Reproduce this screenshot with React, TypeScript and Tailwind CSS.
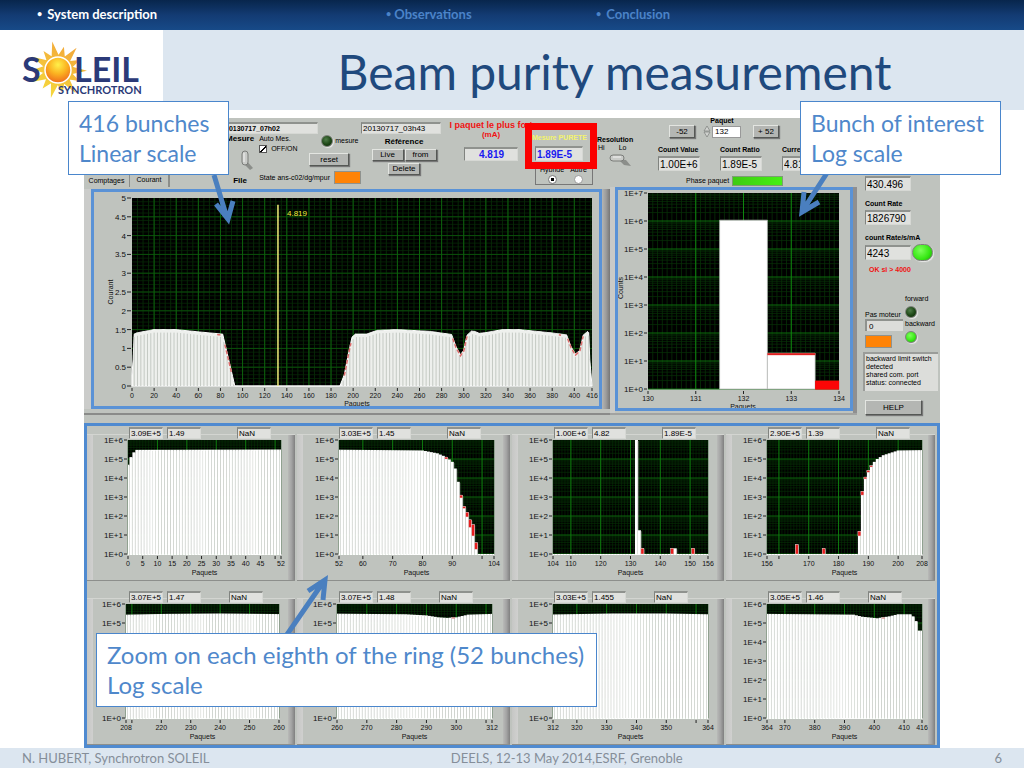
import type { ReactNode } from "react";

interface Tick {
  at: number;
  label?: string;
}

interface RedMark {
  at: number;
  from: number;
  to: number;
}

type Point = [number, number];

// Linear interpolation between control points
function sample(points: Point[], x: number) {
  if (x <= points[0][0]) return points[0][1];
  for (let i = 1; i < points.length; i++) {
    const [x1, y1] = points[i];
    const [x0, y0] = points[i - 1];
    if (x <= x1) return y0 + ((y1 - y0) * (x - x0)) / (x1 - x0);
  }
  return points[points.length - 1][1];
}

const range = (from: number, to: number, step = 1) => {
  const out: number[] = [];
  for (let v = from; v <= to; v += step) out.push(v);
  return out;
};

const ticks = (values: number[], silent: number[] = []): Tick[] => [
  ...values.map((v) => ({ at: v, label: String(v) })),
  ...silent.map((v) => ({ at: v })),
];

const logMinors = [2, 3, 4, 5, 6, 7, 8, 9].map((v) => Math.log10(v));

/* ---------- small instrument controls ---------- */

function Readout({ value, label, className }: { value: string; label: string; className: string }) {
  return (
    <input
      readOnly
      value={value}
      aria-label={label}
      className={`min-w-0 border-t-2 border-l border-r border-b border-t-[#8f928e] border-l-[#80837f] border-r-[#d6d8d4] border-b-[#d6d8d4] bg-[#e0e1de] pl-[1px] outline-none ${className}`}
    />
  );
}

function PanelButton({ children, className = "" }: { children: ReactNode; className?: string }) {
  return (
    <button
      type="button"
      className={`border border-t-[#e3e5e1] border-l-[#e3e5e1] border-r-[#555855] border-b-[#555855] bg-[#b4b6b3] text-[8px] leading-[8px] shadow-[1px_1px_1px_#777] ${className}`}
    >
      {children}
    </button>
  );
}

function Led({ on, className }: { on: boolean; className: string }) {
  return (
    <span
      className={`block shrink-0 rounded-full border border-[#7d827a] shadow-[1px_1px_1px_#e8e8e8] ${
        on
          ? "bg-[radial-gradient(circle_at_40%_35%,#7dff5a,#35e812_60%,#1f9d0c)]"
          : "bg-[radial-gradient(circle_at_40%_35%,#4f7d48,#1d4716_55%,#0c2308)]"
      } ${className}`}
    />
  );
}

/* ---------- charts ---------- */

interface SmallChart {
  width: number;
  left: number;
  plot: number;
  min: number;
  max: number;
  ticks: Tick[];
  points: Point[];
  reds?: RedMark[];
  fields: [string, string, string];
}

function BunchChart({ chart }: { chart: SmallChart }) {
  const { width, left, plot, min, max } = chart;
  const top = 5;
  const height = 114;
  const bottom = top + height;
  const px = (v: number) => left + ((v - min) / (max - min)) * plot;
  const py = (v: number) => bottom - (v / 6) * height;
  const pitch = plot / (max - min);

  return (
    <svg viewBox={`0 0 ${width} 145`} className="block min-w-0 flex-1" role="img" aria-label={`Bunches ${min} to ${max}`}>
      <clipPath id={`clip-${min}`}>
        <rect x={left} y={top} width={plot} height={height + 1} />
      </clipPath>
      <rect x={left} y={top} width={plot} height={height} fill="#000" />
      {range(min, max).map((v) => (
        <path key={v} d={`M${px(v)} ${top}V${bottom}`} stroke="#073a07" strokeWidth="0.5" />
      ))}
      {range(0, 5).map((d) => (
        <g key={d}>
          {logMinors.map((m) => (
            <path key={m} d={`M${left} ${py(d + m)}H${left + plot}`} stroke="#063206" strokeWidth="0.6" />
          ))}
          <path d={`M${left} ${py(d)}H${left + plot}`} stroke="#0c650c" />
        </g>
      ))}
      {range(Math.floor(min / 10) * 10 + 10, max - 1, 10).map((v) => (
        <path key={v} d={`M${px(v)} ${top}V${bottom}`} stroke="#0e7a0e" />
      ))}
      <g clipPath={`url(#clip-${min})`}>
        {range(min, max).map((v) => {
          const y = py(sample(chart.points, v));
          return (
            <g key={v}>
              <rect x={px(v) - pitch / 2} y={y} width={pitch} height={bottom - y + 1} fill="#fff" />
              <path d={`M${px(v) + pitch / 2} ${y + 1}V${bottom}`} stroke="#c3cac1" strokeWidth="0.8" />
            </g>
          );
        })}
        {(chart.reds ?? []).map((r) => (
          <rect
            key={r.at}
            x={px(r.at) - pitch / 2}
            y={py(r.to)}
            width={pitch}
            height={py(r.from) - py(r.to)}
            fill="#e81e1e"
            stroke="#ddd"
            strokeWidth="0.4"
          />
        ))}
      </g>
      <g fontSize="8" fill="#111">
        {range(0, 6).map((d) => (
          <g key={d}>
            <text x={left - 5} y={py(d) + 3} textAnchor="end">
              1E+{d}
            </text>
            <path d={`M${left - 4} ${py(d)}h3`} stroke="#222" />
          </g>
        ))}
        {chart.ticks.map((t) => (
          <g key={t.at}>
            <path d={`M${px(t.at)} ${bottom + 2}v3`} stroke="#222" />
            <text x={px(t.at)} y={bottom + 12} textAnchor="middle" fontSize="7">
              {t.label}
            </text>
          </g>
        ))}
        <text x={left + plot / 2} y={bottom + 21} textAnchor="middle" fontSize="7">
          Paquets
        </text>
      </g>
    </svg>
  );
}

const topRow: SmallChart[] = [
  {
    width: 195, left: 35, plot: 153, min: 0, max: 52,
    ticks: ticks([0, 5, 10, 15, 20, 25, 30, 35, 40, 45, 52], [50]),
    points: [[0, 4.7], [1, 5.1], [2, 5.35], [3, 5.48], [52, 5.5]],
    fields: ["3.09E+5", "1.49", "NaN"],
  },
  {
    width: 200, left: 36, plot: 155, min: 52, max: 104,
    ticks: ticks([52, 60, 70, 80, 90, 104], [100]),
    points: [[52, 5.49], [80, 5.45], [85, 5.3], [88, 5.1], [90, 4.85], [91, 4.5], [92, 3.8], [93, 3.1], [94, 2.5], [95, 2.2], [96, 1.8], [97, 1.55], [98, 0.6], [99, 0], [104, 0]],
    reds: [
      { at: 88, from: 5, to: 5.1 }, { at: 93, from: 2.95, to: 3.1 }, { at: 94, from: 2.4, to: 2.5 },
      { at: 95, from: 1.95, to: 2.2 }, { at: 96, from: 1.4, to: 1.8 }, { at: 97, from: 0.95, to: 1.55 },
      { at: 98, from: 0.25, to: 0.6 },
    ],
    fields: ["3.03E+5", "1.45", "NaN"],
  },
  {
    width: 199, left: 35, plot: 155, min: 104, max: 156,
    ticks: ticks([104, 110, 120, 130, 140, 150, 156]),
    points: [[104, 0], [131, 0], [132, 6], [133, 1.25], [134, 0.3], [135, 0], [143, 0], [144, 0.3], [145, 0.3], [146, 0], [150, 0], [151, 0.3], [152, 0], [156, 0]],
    reds: [{ at: 134, from: 0, to: 0.3 }, { at: 144, from: 0, to: 0.3 }, { at: 151, from: 0, to: 0.3 }],
    fields: ["1.00E+6", "4.82", "1.89E-5"],
  },
  {
    width: 196, left: 35, plot: 155, min: 156, max: 208,
    ticks: ticks([156, 170, 180, 190, 200, 208], [160]),
    points: [[156, 0], [165, 0], [166, 0.5], [167, 0], [174, 0], [175, 0.3], [176, 0], [186, 0], [187, 1.2], [188, 3.3], [189, 4.05], [190, 4.4], [191, 4.65], [192, 4.85], [193, 5], [195, 5.2], [198, 5.35], [200, 5.45], [208, 5.47]],
    reds: [
      { at: 166, from: 0, to: 0.5 }, { at: 175, from: 0, to: 0.3 }, { at: 187, from: 0.95, to: 1.2 },
      { at: 188, from: 3.1, to: 3.3 }, { at: 189, from: 3.95, to: 4.05 }, { at: 190, from: 4.3, to: 4.4 },
      { at: 191, from: 4.58, to: 4.65 },
    ],
    fields: ["2.90E+5", "1.39", "NaN"],
  },
];

const bottomRow: SmallChart[] = [
  {
    width: 195, left: 33, plot: 153, min: 208, max: 260,
    ticks: ticks([208, 220, 230, 240, 250, 260], [210]),
    points: [[208, 5.44], [222, 5.48], [240, 5.5], [260, 5.47]],
    fields: ["3.07E+5", "1.47", "NaN"],
  },
  {
    width: 200, left: 34, plot: 155, min: 260, max: 312,
    ticks: ticks([260, 270, 280, 290, 300, 312], [310]),
    points: [[260, 5.49], [283, 5.46], [290, 5.4], [294, 5.3], [297, 5.27], [300, 5.3], [304, 5.44], [312, 5.48]],
    reds: [{ at: 299, from: 5.24, to: 5.29 }],
    fields: ["3.07E+5", "1.48", "NaN"],
  },
  {
    width: 199, left: 35, plot: 155, min: 312, max: 364,
    ticks: ticks([312, 320, 330, 340, 350, 364], [360]),
    points: [[312, 5.45], [332, 5.5], [350, 5.5], [364, 5.46]],
    fields: ["3.03E+5", "1.455", "NaN"],
  },
  {
    width: 196, left: 35, plot: 155, min: 364, max: 416,
    ticks: ticks([364, 370, 380, 390, 400, 410, 416]),
    points: [[364, 5.48], [393, 5.44], [396, 5.33], [401, 5.25], [405, 5.35], [408, 5.46], [412, 5.46], [413, 5.35], [414, 5.1], [415, 4.6], [416, 4.6]],
    reds: [{ at: 403, from: 5.24, to: 5.28 }],
    fields: ["3.05E+5", "1.46", "NaN"],
  },
];

function ChartCell({ chart, padding, gap }: { chart: SmallChart; padding: string; gap: string }) {
  return (
    <div className={`flex flex-col ${padding}`}>
      <div className="relative z-10 flex gap-1 pl-[42px]">
        <Readout label="Counts" value={chart.fields[0]} className="h-3 w-[34px] text-[8px]" />
        <Readout label="Current" value={chart.fields[1]} className="h-3 w-[34px] text-[8px]" />
        <Readout label="Purity" value={chart.fields[2]} className={`h-3 w-[34px] text-[8px] ${gap}`} />
      </div>
      <div className="mr-[2px] -mt-[5px] flex border-t border-b border-t-[#d3d5d1] border-b-[#8d8f8c]">
        <div className="w-[6px] bg-linear-to-r from-[#c6c7c5] to-[#d0d0cf]" />
        <BunchChart chart={chart} />
        <div className="w-[7px] bg-linear-to-r from-[#b9bab8] via-[#a3a3a3] to-[#808080]" />
      </div>
    </div>
  );
}

const currentPoints: Point[] = [
  [0, 0.3], [1, 0.7], [2, 1.38], [4, 1.41], [20, 1.5], [40, 1.5], [60, 1.44], [82, 1.38], [93, 0], [188, 0],
  [192, 0.3], [196, 0.9], [199, 1.3], [202, 1.38], [212, 1.38], [222, 1.48], [240, 1.5], [270, 1.45], [289, 1.37],
  [293, 1.05], [297, 0.83], [300, 0.95], [303, 1.35], [307, 1.46], [310, 1.45], [314, 1.4], [320, 1.42], [335, 1.5],
  [350, 1.5], [380, 1.41], [393, 1.36], [397, 1.05], [401, 0.85], [405, 0.95], [408, 1.35], [412, 1.45], [413, 1.42],
  [414, 0.7], [416, 0],
];

// Bunch spans whose tops are flagged in red
const currentReds: Point[] = [[77, 80], [84, 90], [192, 198], [290, 303], [386, 388], [394, 408]];

function CurrentChart() {
  const left = 38;
  const top = 6;
  const bottom = 194;
  const px = (v: number) => left + (v / 416) * 460;
  const py = (v: number) => bottom - (v / 5) * 188;
  return (
    <svg viewBox="0 0 505 214" className="block w-full" role="img" aria-label="Current per bunch">
      <rect x={left} y={top} width="460" height="188" fill="#000" />
      {range(5, 415, 5).map((v) => (
        <path key={v} d={`M${px(v)} ${top}V${bottom}`} stroke="#0a380a" strokeWidth="0.7" />
      ))}
      {range(1, 49).map((v) => (
        <path key={v} d={`M${left} ${py(v / 10)}h460`} stroke="#072d07" strokeWidth="0.7" />
      ))}
      {range(1, 9).map((v) => (
        <path key={v} d={`M${left} ${py(v / 2)}h460`} stroke="#0b510b" />
      ))}
      {range(20, 400, 20).map((v) => (
        <path key={v} d={`M${px(v)} ${top}V${bottom}`} stroke="#0d610d" />
      ))}
      <path
        d={`M${left} ${bottom}${range(0, 416).map((v) => `L${px(v)} ${py(sample(currentPoints, v))}`).join("")}V${bottom}Z`}
        fill="#eef0ed"
        stroke="#fff"
      />
      {range(2, 415, 3).map((v) => {
        const value = sample(currentPoints, v);
        return value > 0.1 ? (
          <path key={v} d={`M${px(v)} ${py(value) + 3}V${bottom}`} stroke="#c4c9c3" strokeWidth="1" />
        ) : null;
      })}
      {currentReds.map(([from, to]) => (
        <path
          key={from}
          d={`M${range(from, to).map((v) => `${px(v)} ${py(sample(currentPoints, v)) + 1}`).join("L")}`}
          fill="none"
          stroke="#dc6b6b"
          strokeWidth="1.5"
          strokeDasharray="4 2"
        />
      ))}
      <path d={`M${px(132)} ${py(4.819)}V${bottom}`} stroke="#f3ee7a" strokeWidth="1.5" />
      <text x="193" y="24" fontSize="8" fill="#f0ee3c">
        4.819
      </text>
      <g fontSize="8" fill="#111">
        {range(0, 10).map((v) => (
          <g key={v}>
            <text x={left - 6} y={py(v / 2) + 3} textAnchor="end">
              {v / 2}
            </text>
            <path d={`M${left - 5} ${py(v / 2)}h4`} stroke="#222" />
          </g>
        ))}
        {[...range(0, 400, 20), 416].map((v) => (
          <g key={v}>
            <path d={`M${px(v)} ${bottom + 2}v3`} stroke="#222" />
            <text x={px(v)} y={bottom + 12} textAnchor="middle" fontSize="7">
              {v}
            </text>
          </g>
        ))}
        <text x="263" y="214" textAnchor="middle" fontSize="7">
          Paquets
        </text>
        <text transform="translate(19 100) rotate(-90)" textAnchor="middle" fontSize="7">
          Courant
        </text>
      </g>
    </svg>
  );
}

function InterestChart() {
  const left = 30;
  const top = 3;
  const bottom = 199;
  const px = (v: number) => left + ((v - 130) / 4) * 191;
  const py = (v: number) => bottom - v * 28;
  return (
    <svg viewBox="0 0 232 218" className="block w-full" role="img" aria-label="Counts around bunch 132">
      <rect x={left} y={top} width="191" height="196" fill="#000" />
      {range(1, 39).map((v) => (
        <path key={v} d={`M${px(130 + v / 10)} ${top}V${bottom}`} stroke="#083808" strokeWidth="0.7" />
      ))}
      {range(0, 6).map((d) => (
        <g key={d}>
          {logMinors.map((m) => (
            <path key={m} d={`M${left} ${py(d + m)}h191`} stroke="#073207" strokeWidth="0.7" />
          ))}
          <path d={`M${left} ${py(d)}h191`} stroke="#0d6e0d" />
        </g>
      ))}
      {[131, 132, 133].map((v) => (
        <path key={v} d={`M${px(v)} ${top}V${bottom}`} stroke="#0e860e" />
      ))}
      <path d={`M${px(131.5)} ${bottom}V${py(6.03)}H${px(132.5)}V${bottom}Z`} fill="#fff" stroke="#b8b8b8" strokeWidth="0.7" />
      <path d={`M${px(132.5)} ${bottom}V${py(1.28)}H${px(133.5)}V${bottom}Z`} fill="#fff" stroke="#b8b8b8" strokeWidth="0.7" />
      <rect x={px(132.5)} y={py(1.28)} width="48" height="2" fill="#e02020" />
      <rect x={px(133.5)} y={py(0.3)} width="24" height="9" fill="#fb0606" />
      <g fontSize="8" fill="#111">
        {range(0, 7).map((d) => (
          <g key={d}>
            <text x={left - 5} y={py(d) + 3} textAnchor="end">
              1E+{d}
            </text>
            <path d={`M${left - 4} ${py(d)}h3`} stroke="#222" />
          </g>
        ))}
        {range(130, 134).map((v) => (
          <g key={v}>
            <path d={`M${px(v)} ${bottom + 2}v3`} stroke="#222" />
            <text x={px(v)} y={bottom + 12} textAnchor="middle" fontSize="7">
              {v}
            </text>
          </g>
        ))}
        <text x="125" y="219" textAnchor="middle" fontSize="7">
          Paquets
        </text>
        <text transform="translate(5 98) rotate(-90)" textAnchor="middle" fontSize="7">
          Counts
        </text>
      </g>
    </svg>
  );
}

/* ---------- instrument panel ---------- */

function Controls() {
  return (
    <div className="flex h-[69px] text-[7px] leading-[8px] whitespace-nowrap">
      <div className="flex min-w-0 flex-1 items-end">
        <button type="button" className="h-[14px] w-[46px] border-t border-r border-t-[#dadbd8] border-r-[#8b8d8a]">
          Comptages
        </button>
        <button type="button" className="h-4 w-[40px] border-t border-r-2 border-t-[#dadbd8] border-r-[#8b8d8a]">
          Courant
        </button>
      </div>

      <div className="w-[138px] pt-1">
        <Readout label="Measurement file" value="20130717_07h02" className="block h-3 w-[95px] text-[7px] font-bold" />
        <div className="flex pt-[1px]">
          <div className="flex w-[38px] flex-col items-center text-[8px] font-bold">
            <span>Mesure</span>
            <button type="button" role="switch" aria-checked="true" aria-label="Mesure or File" className="my-[7px] ml-3">
              <svg viewBox="0 0 14 20" className="block h-5 w-[14px]">
                <path d="M6 9l8 9-3 2-6-6z" fill="#8b8e8a" />
                <rect x="3" y="1" width="6" height="14" rx="3" fill="#c9cbc8" stroke="#7a7c79" />
                <path d="M5 3v9" stroke="#f2f2f2" />
              </svg>
            </button>
            <span>File</span>
          </div>
          <div className="flex-1 pl-[2px]">
            <div className="flex">
              <div className="w-[50px]">
                <div>Auto Mes.</div>
                <label className="flex items-center gap-1 pt-[2px]">
                  <input type="checkbox" defaultChecked className="h-2 w-2 appearance-none border border-[#555] bg-white bg-[linear-gradient(135deg,transparent_42%,#000_42%,#000_60%,transparent_60%)]" />
                  OFF/ON
                </label>
              </div>
              <div>
                <div className="flex items-center gap-[2px] pl-3">
                  <Led on={false} className="h-3 w-3" />
                  mesure
                </div>
                <PanelButton className="mt-[6px] block h-[13px] w-[40px]">reset</PanelButton>
              </div>
            </div>
            <div className="flex items-center gap-[4px] pt-[5px]">
              State ans-c02/dg/mpur
              <span className="h-[13px] w-[27px] border border-[#8f928e] bg-[#ff8306]" />
            </div>
          </div>
        </div>
      </div>

      <div className="flex w-[86px] flex-col items-center pt-1">
        <Readout label="Reference file" value="20130717_03h43" className="block h-3 w-[80px] self-start text-[8px]" />
        <div className="pt-1 text-[8px] font-bold">Référence</div>
        <div className="flex gap-[1px] pt-[3px]">
          <PanelButton className="h-3 w-8">Live</PanelButton>
          <PanelButton className="h-3 w-8">from</PanelButton>
        </div>
        <PanelButton className="mt-[2px] h-3 w-8">Delete</PanelButton>
      </div>

      <div className="flex w-[78px] flex-col items-center pt-[3px] pl-[10px] text-[9px] leading-[9px] font-bold text-[#f01212]">
        <div>I paquet le plus fort</div>
        <div className="text-[8px]">(mA)</div>
        <Readout label="Largest bunch (mA)" value="4.819" className="mt-[8px] h-[14px] w-[54px] text-center text-[10px] font-bold text-[#1a1af0]" />
      </div>

      <div className="flex w-[72px] flex-col">
        <div className="relative z-10 mt-[5px] h-[46px] overflow-hidden border-[7px] border-[#fb0000] bg-[#bfc3be] pt-1">
          <div className="font-bold text-[#f4f46c]">Mesure PURETE</div>
          <Readout label="Mesure PURETE" value="1.89E-5" className="mt-1 ml-[3px] block h-[15px] w-[48px] text-[10px] font-bold text-[#1a1af0]" />
        </div>
        <fieldset className="-mt-[3px] ml-[10px] flex w-[58px] gap-[6px] border border-t-0 border-[#777] pl-[4px]">
          <label className="flex flex-col items-center">
            Hybride
            <input type="radio" name="mode" defaultChecked className="mt-[1px] h-[9px] w-[9px] appearance-none rounded-full border border-[#777] bg-white bg-[radial-gradient(#000_30%,transparent_40%)]" />
          </label>
          <label className="flex flex-col items-center">
            Autre
            <input type="radio" name="mode" className="mt-[1px] h-[9px] w-[9px] appearance-none rounded-full border border-[#999] bg-white" />
          </label>
        </fieldset>
      </div>

      <div className="w-[43px] pt-[18px]">
        <div className="font-bold">Resolution</div>
        <div className="flex gap-[14px] pl-[1px]">
          <span>Hi</span>
          <span>Lo</span>
        </div>
        <button type="button" role="switch" aria-checked="false" aria-label="Resolution" className="ml-3 block">
          <svg viewBox="0 0 22 14" className="block h-[14px] w-[22px]">
            <path d="M9 7l8 1 5 6-7-1z" fill="#8b8e8a" />
            <rect x="1" y="3" width="14" height="6" rx="3" fill="#c9cbc8" stroke="#7a7c79" />
            <path d="M4 5h8" stroke="#f2f2f2" />
          </svg>
        </button>
      </div>

      <div className="w-[217px] pl-[18px]">
        <div className="flex h-[20px] items-end gap-2 pl-[11px]">
          <PanelButton className="h-[13px] w-[26px]">-52</PanelButton>
          <label className="flex flex-col items-center font-bold">
            Paquet
            <span className="flex items-center">
              <svg viewBox="0 0 9 13" className="h-[13px] w-[9px]">
                <path d="M1 6l3-5 3 5zM1 7l3 5 3-5z" fill="#cfd1ce" stroke="#7d7f7c" strokeWidth="0.7" />
              </svg>
              <input defaultValue="132" className="h-[12px] w-[29px] border border-[#999] bg-white px-[2px] text-[8px] font-normal" />
            </span>
          </label>
          <PanelButton className="ml-1 h-[13px] w-[26px]">+ 52</PanelButton>
        </div>
        <div className="flex gap-[20px] pt-[8px] font-bold">
          {[
            ["Count Value", "1.00E+6"],
            ["Count Ratio", "1.89E-5"],
            ["Current (mA)", "4.819"],
          ].map(([label, value]) => (
            <label key={label} className="flex w-[42px] flex-col gap-[2px]">
              {label}
              <Readout label={label} value={value} className="h-[15px] w-full text-[10px] font-normal" />
            </label>
          ))}
        </div>
        <div className="flex items-center gap-[3px] pt-[5px] pl-[28px]">
          Phase paquet
          <span className="h-[10px] w-[51px] border border-[#7d9c74] bg-linear-to-r from-[#3ecb12] to-[#45f015]" />
        </div>
      </div>
    </div>
  );
}

function SideReadouts() {
  return (
    <div className="w-[83px] pt-[58px] pl-2 text-[7px] leading-[8px] whitespace-nowrap">
      <Readout label="Current" value="430.496" className="block h-[15px] w-[46px] text-[10px]" />
      <div className="mt-[9px] font-bold">Count Rate</div>
      <Readout label="Count Rate" value="1826790" className="mt-[2px] block h-[15px] w-[46px] text-[10px]" />
      <div className="mt-[9px] font-bold">count Rate/s/mA</div>
      <div className="mt-[2px] flex items-center">
        <Readout label="count Rate/s/mA" value="4243" className="block h-[15px] w-[46px] text-[10px]" />
        <Led on className="ml-[1px] h-[17px] w-[21px]" />
      </div>
      <div className="mt-[5px] pl-1 font-bold text-[#f01212]">OK si &gt; 4000</div>
      <div className="flex pt-[21px]">
        <div className="w-[40px] pt-[16px]">
          <label htmlFor="steps">Pas moteur</label>
          <input id="steps" defaultValue="0" className="block h-3 w-[38px] border-t-2 border-l-2 border-[#8f928e] bg-[#dcddda] px-[2px] text-[8px]" />
          <span className="mt-[4px] block h-[13px] w-[27px] border border-[#8f928e] bg-[#ff8306]" />
        </div>
        <div>
          forward
          <Led on={false} className="mt-[3px] h-3 w-3" />
          <div className="pt-[2px]">backward</div>
          <Led on className="mt-[3px] h-3 w-3" />
        </div>
      </div>
      <div className="mt-[4px] -ml-[2px] h-[39px] w-[75px] border-t-2 border-l-2 border-[#9a9c99] bg-[#dcddda] pt-[1px] pl-[1px]">
        backward limit switch
        <br />
        detected
        <br />
        shared com. port
        <br />
        status: connected
      </div>
      <PanelButton className="mt-[9px] block h-[15px] w-[57px]">HELP</PanelButton>
    </div>
  );
}

function InstrumentPanel() {
  return (
    <div className="mx-[84px] bg-[#bfc3be] font-['Liberation_Sans',Arial,sans-serif] text-black">
      <div className="flex">
        <div className="min-w-0 flex-1">
          <Controls />
          <div className="flex">
            <div className="flex min-w-0 flex-[526] border-b-2 border-[#8a8b89] pt-[2px] pb-[4px]">
              <div className="w-[7px] bg-[#cbccca]" />
              <div className="min-w-0 flex-1 border-[3px] border-[#5a92d6]">
                <CurrentChart />
              </div>
              <div className="w-2 bg-linear-to-r from-[#b4b5b3] via-[#9c9c9c] to-[#777777]" />
            </div>
            <div className="flex min-w-0 flex-[247] items-start border-b-2 border-[#a2a3a1]">
              <div className="w-[5px] self-stretch bg-[#c9cac8]" />
              <div className="min-w-0 flex-1 border-[3px] border-[#5a92d6]">
                <InterestChart />
              </div>
              <div className="w-1 self-stretch bg-[#8f8f90]" />
            </div>
          </div>
        </div>
        <SideReadouts />
      </div>
      <div className="mt-2 border-[3px] border-[#4f8ad0]">
        <div className="grid grid-cols-[210fr_215fr_214fr_211fr]">
          {topRow.map((chart) => (
            <ChartCell key={chart.min} chart={chart} padding="pt-[1px]" gap="ml-[32px]" />
          ))}
          {bottomRow.map((chart) => (
            <ChartCell key={chart.min} chart={chart} padding="pt-[10px]" gap="ml-[24px]" />
          ))}
        </div>
      </div>
    </div>
  );
}

/* ---------- slide ---------- */

function Logo() {
  const rays = range(0, 13).map((i) => {
    const a = (i / 14) * Math.PI * 2 - Math.PI / 2 - 0.2;
    const r = i % 2 ? 24 : 29;
    const at = (angle: number, radius: number) => `${58 + Math.cos(angle) * radius} ${40 + Math.sin(angle) * radius}`;
    return `M${at(a - 0.32, 13)}L${at(a, r)}L${at(a + 0.32, 13)}Z`;
  });
  return (
    <svg viewBox="0 0 163 80" className="block h-20 w-[163px]" role="img" aria-label="SOLEIL Synchrotron">
      <defs>
        <radialGradient id="sun" cx="0.5" cy="0.3" r="0.7">
          <stop offset="0" stopColor="#fff04a" />
          <stop offset="0.5" stopColor="#fbb321" />
          <stop offset="1" stopColor="#ef6a1c" />
        </radialGradient>
        <linearGradient id="rays" x1="0.8" y1="0" x2="0.2" y2="1">
          <stop offset="0" stopColor="#f2a23a" />
          <stop offset="1" stopColor="#f6dc3c" />
        </linearGradient>
      </defs>
      <path d={rays.join("")} fill="url(#rays)" />
      <g fill="#2b3a78" fontFamily="Lato, sans-serif" fontWeight="700">
        <text x="22" y="52" fontSize="34">S</text>
        <text x="74" y="52" fontSize="34">LEIL</text>
        <text x="58" y="64" fontSize="11">SYNCHROTRON</text>
      </g>
      <circle cx="58" cy="40" r="13" fill="url(#sun)" stroke="#fff" strokeWidth="1.5" />
    </svg>
  );
}

function Callout({ lines, className }: { lines: string[]; className: string }) {
  return (
    <div className={`absolute z-20 border border-[#4a86cc] bg-white py-[6px] pl-[10px] leading-[30px] whitespace-nowrap text-[#4f88cb] ${className}`}>
      {lines.map((line) => (
        <p key={line}>{line}</p>
      ))}
    </div>
  );
}

function Arrow({ d, className }: { d: string; className: string }) {
  return (
    <svg viewBox="0 0 50 64" className={`absolute z-10 h-16 w-[50px] ${className}`} aria-hidden="true">
      <path d={d} fill="none" stroke="#4a7fbf" strokeWidth="5" />
    </svg>
  );
}

export default function App() {
  return (
    <div className="min-h-screen bg-white font-[Lato,sans-serif]">
      <nav className="h-[30px] bg-linear-to-b from-[#08264c] via-[#133b73] to-[#174a88]">
        <ul className="grid h-full grid-cols-[349fr_210fr_428fr] items-center pb-[2px] pl-[37px] text-[13px] leading-4 font-bold text-[#4b83c8]">
          <li className="flex gap-[5px] text-white">
            <span className="text-[9px]">•</span>
            <a href="#system">System description</a>
          </li>
          <li className="flex gap-[3px]">
            <span className="text-[9px]">•</span>
            <a href="#observations">Observations</a>
          </li>
          <li className="flex gap-[5px]">
            <span className="text-[9px]">•</span>
            <a href="#conclusion">Conclusion</a>
          </li>
        </ul>
      </nav>

      <header className="flex h-20 items-center bg-[#dce6f0]">
        <div className="bg-white">
          <Logo />
        </div>
        <h1 className="flex-1 pt-1 pl-[42px] text-center text-[48px] leading-[50px] text-[#1f497d]">Beam purity measurement</h1>
      </header>

      <main className="relative pt-2">
        <InstrumentPanel />
        <Callout lines={["416 bunches", "Linear scale"]} className="-top-[9px] left-[68px] w-[161px] text-[23px]" />
        <Callout lines={["Bunch of interest", "Log scale"]} className="-top-[9px] right-[23px] w-[201px] text-[23px]" />
        <Callout lines={["Zoom on each eighth of the ring (52 bunches)", "Log scale"]} className="top-[523px] left-[96px] w-[501px] text-[24px]" />
        <Arrow d="M14 9L27 52M16 38L28 53L33 35" className="top-[56px] left-[200px]" />
        <Arrow d="M37 3L13 40M14 22L12 42L29 32" className="top-[60px] right-[184px]" />
        <Arrow d="M6 63L44 8M28 18L45 7L43 27" className="top-[463px] left-[280px]" />
      </main>

      <footer className="grid h-5 grid-cols-[429fr_544fr_auto] items-center bg-[#dce6f0] px-[22px] text-[13px] leading-4 text-[#858e99]">
        <span>N. HUBERT, Synchrotron SOLEIL</span>
        <span>DEELS, 12-13 May 2014,ESRF, Grenoble</span>
        <span>6</span>
      </footer>
    </div>
  );
}
